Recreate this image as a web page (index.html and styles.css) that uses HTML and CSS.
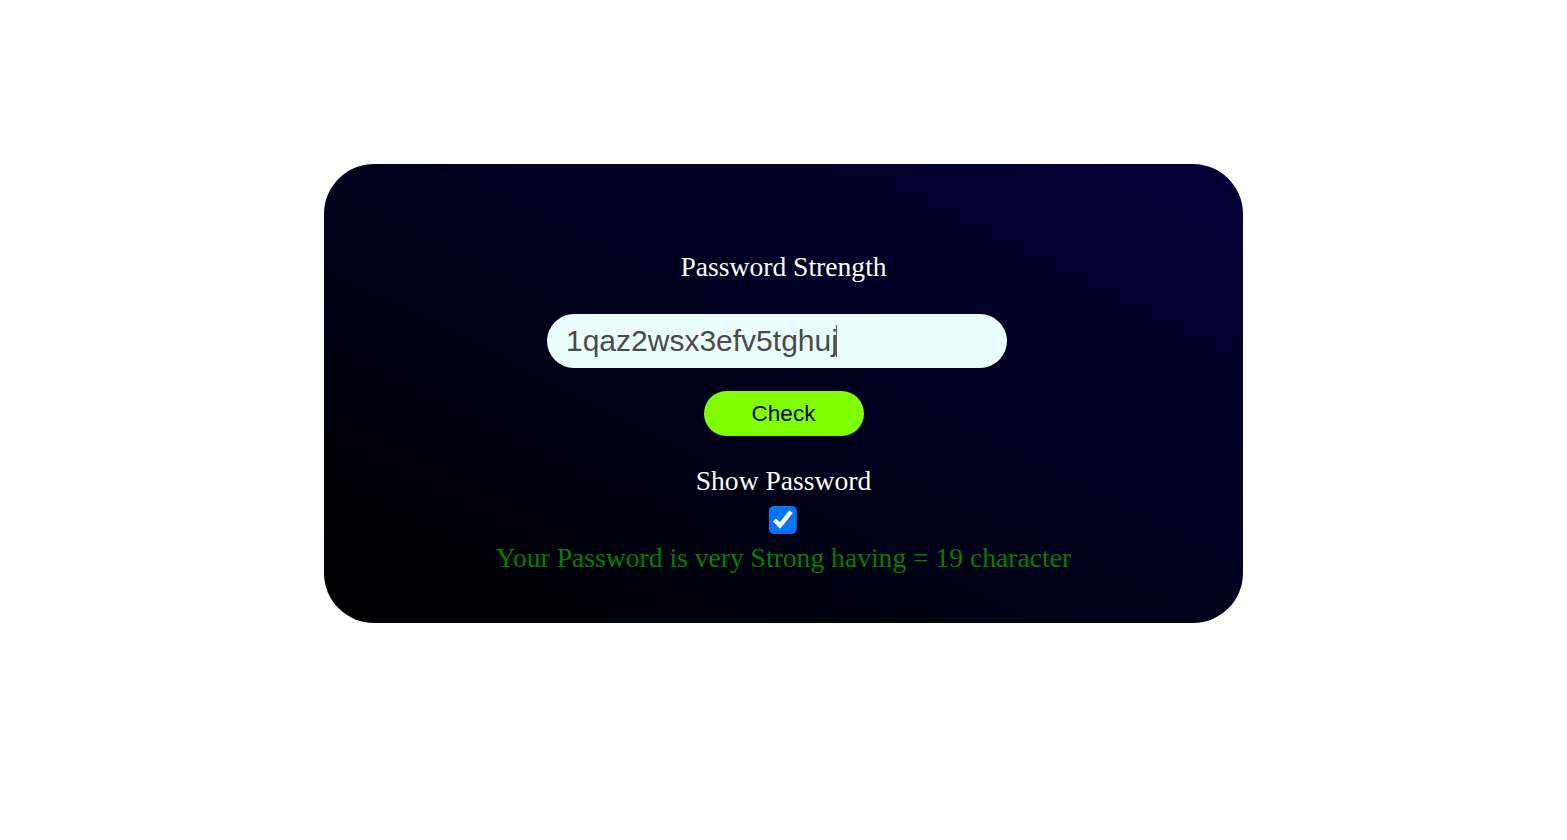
FILE: index.html
```html
<!DOCTYPE html>
<html lang="en">
<head>
<meta charset="utf-8">
<title>Password Strength</title>
<link rel="stylesheet" href="styles.css">
</head>
<body>
<div class="card">
  <div class="title">Password Strength</div>
  <div class="field">
    <input class="pass" type="text" value="1qaz2wsx3efv5tghuj">
    <span class="caret"></span>
  </div>
  <button class="check">Check</button>
  <div class="show">Show Password</div>
  <input class="toggle" type="checkbox" checked>
  <div class="result">Your Password is very Strong having = 19 character</div>
</div>
</body>
</html>
```
FILE: styles.css
```css
html, body {
  margin: 0;
  padding: 0;
  background: #ffffff;
}
body {
  font-family: "Liberation Serif", "Times New Roman", serif;
}
.card {
  width: 919px;
  height: 459px;
  margin: 164px auto 0;
  box-sizing: border-box;
  border-radius: 50px;
  background: linear-gradient(to top right, #000000, #000038);
  display: flex;
  flex-direction: column;
  align-items: center;
  padding-top: 88px;
}
.title {
  color: #ffffff;
  font-size: 27.6px;
  line-height: 30px;
}
.field {
  position: relative;
  margin-top: 32px;
  margin-right: 13px;
  height: 54px;
}
.pass {
  display: block;
  width: 460px;
  height: 54px;
  box-sizing: border-box;
  border: none;
  outline: none;
  border-radius: 27px;
  background: #ebfefe;
  color: #4a4a4a;
  font-family: "Liberation Sans", Arial, sans-serif;
  font-size: 30px;
  padding: 0 19px;
}
.caret {
  position: absolute;
  left: 289px;
  top: 11px;
  width: 1px;
  height: 32px;
  background: #555555;
}
.check {
  margin-top: 23px;
  width: 160px;
  height: 45px;
  border: none;
  border-radius: 23px;
  background: #7fff00;
  color: #000000;
  font-family: "Liberation Sans", Arial, sans-serif;
  font-size: 22.5px;
  padding: 0;
}
.show {
  margin-top: 30px;
  color: #ffffff;
  font-size: 27.6px;
  line-height: 30px;
}
.toggle {
  zoom: 2.3;
  margin: 3.9px 0 0 0;
  width: 13px;
  height: 13px;
}
.result {
  margin-top: 7px;
  color: #008000;
  font-size: 27.6px;
  line-height: 32px;
}
```
